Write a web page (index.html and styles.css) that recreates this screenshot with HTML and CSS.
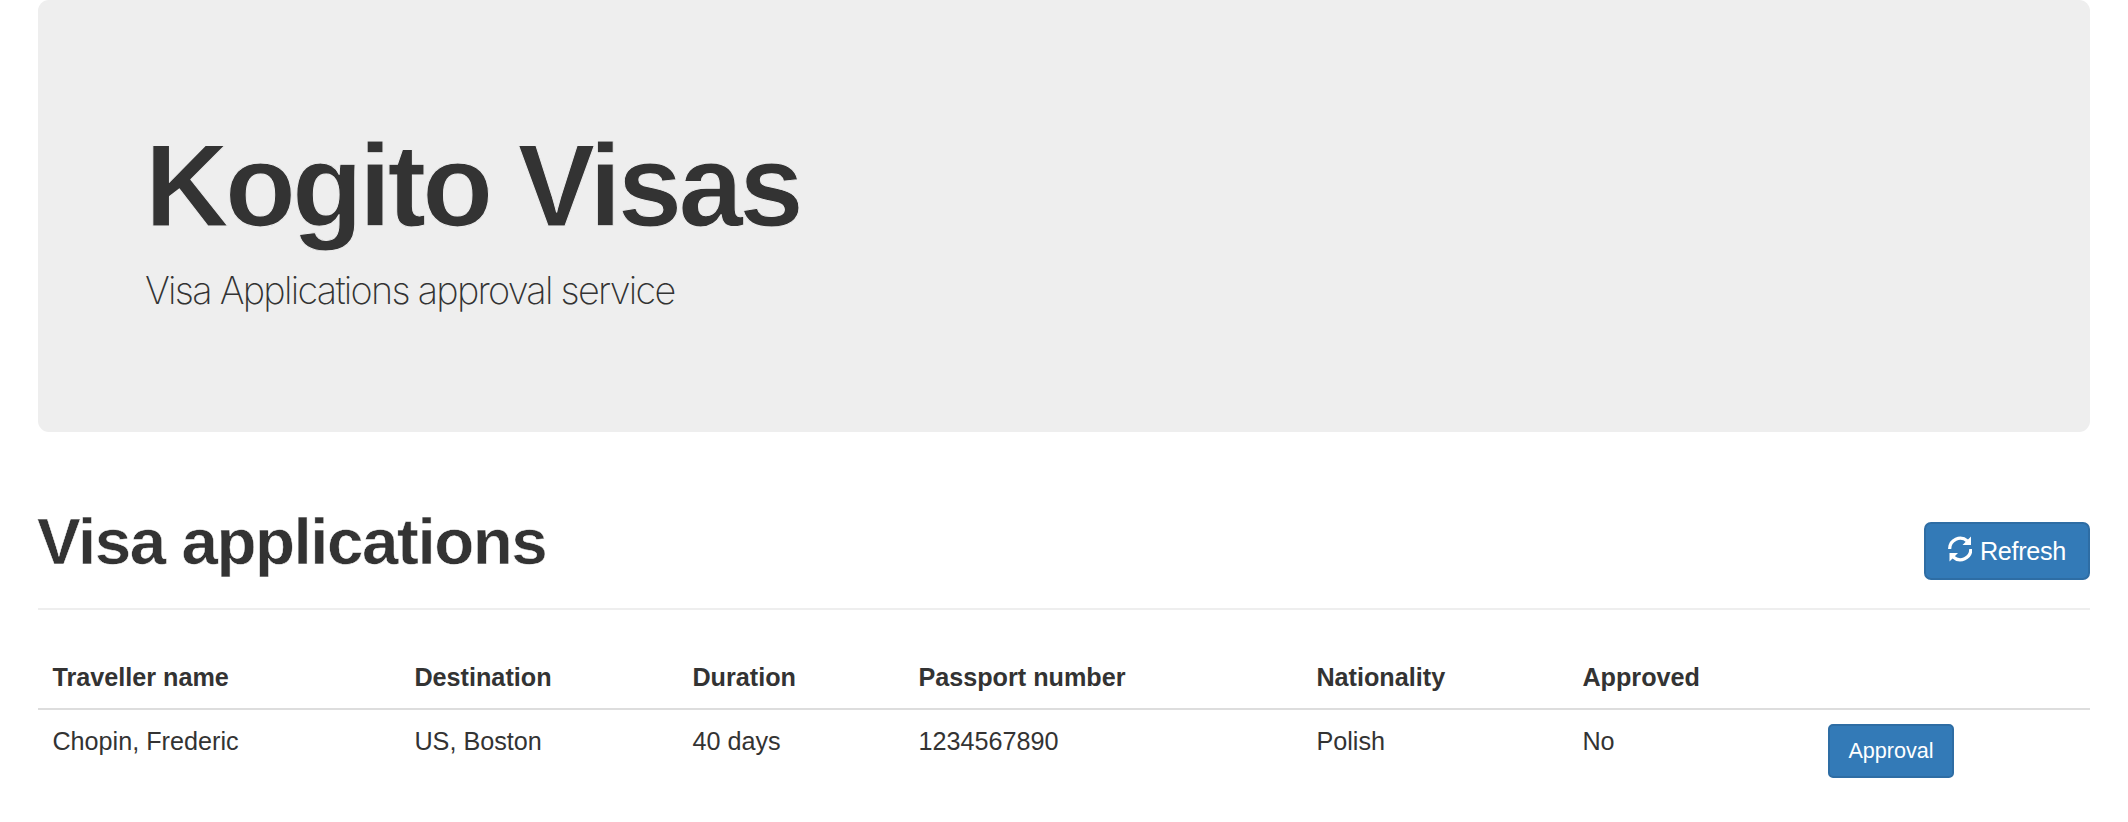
FILE: index.html
```html
<!DOCTYPE html>
<html lang="en">
<head>
<meta charset="utf-8">
<title>Kogito Visas</title>
<link rel="stylesheet" href="styles.css">
</head>
<body>
<div class="container">
  <header class="jumbotron">
    <h1 class="jumbotron-title">Kogito Visas</h1>
    <p class="jumbotron-lead">Visa Applications approval service</p>
  </header>
  <div class="page-header">
    <h1 class="page-title">Visa applications</h1>
    <button class="btn btn-refresh" type="button">
      <svg class="icon" viewBox="0 0 24 26" aria-hidden="true">
        <path d="M1.7 13A10.5 10.5 0 0 1 19.3 5" fill="none" stroke="currentColor" stroke-width="3.2"/>
        <path d="M23 0.5V9H14.5Z" fill="currentColor"/>
        <path d="M22.8 13A10.5 10.5 0 0 1 5.2 21" fill="none" stroke="currentColor" stroke-width="3.2"/>
        <path d="M1.5 25.5V17H10Z" fill="currentColor"/>
      </svg>
      <span class="btn-label">Refresh</span>
    </button>
  </div>
  <table class="table">
    <colgroup>
      <col class="col-name"><col class="col-destination"><col class="col-duration"><col class="col-passport"><col class="col-nationality"><col class="col-approved"><col>
    </colgroup>
    <thead>
      <tr><th>Traveller name</th><th>Destination</th><th>Duration</th><th>Passport number</th><th>Nationality</th><th>Approved</th><th></th></tr>
    </thead>
    <tbody>
      <tr><td>Chopin, Frederic</td><td>US, Boston</td><td>40 days</td><td>1234567890</td><td>Polish</td><td>No</td><td class="cell-action"><button class="btn btn-sm" type="button">Approval</button></td></tr>
    </tbody>
  </table>
</div>
</body>
</html>
```

FILE: styles.css
```css
* { box-sizing: border-box; }
body {
  margin: 0;
  background: #fff;
  color: #333;
  font: 25.2px/36px "Liberation Sans", Arial, sans-serif;
}
.container { padding: 0 38px; }
.jumbotron {
  height: 432px;
  padding: 124px 107px 0;
  background: #eee;
  border-radius: 11px;
}
.jumbotron-title {
  margin: 0;
  font-size: 116px;
  line-height: 125px;
  font-weight: 700;
  letter-spacing: -3.8px;
  -webkit-text-stroke: 1px #eee;
}
.jumbotron-lead {
  margin: 14px 0 0;
  font-family: Inter, "Liberation Sans", sans-serif;
  font-size: 37.8px;
  line-height: 54px;
  font-weight: 200;
  letter-spacing: -1.73px;
}
.page-header {
  display: flex;
  justify-content: space-between;
  align-items: flex-start;
  height: 178px;
  padding-top: 73px;
  border-bottom: 2px solid #eee;
}
.page-title {
  margin: 1px 0 0 -1px;
  font-size: 65.5px;
  line-height: 71px;
  font-weight: 700;
  letter-spacing: -1.45px;
  -webkit-text-stroke: 0.5px #fff;
}
.btn {
  display: flex;
  align-items: center;
  justify-content: center;
  padding: 0;
  border: 2px solid #2e6da4;
  background: #337ab7;
  color: #fff;
  font-family: inherit;
}
.btn-refresh {
  width: 166px;
  height: 58px;
  margin-top: 17px;
  gap: 8px;
  border-radius: 7px;
  font-size: 25.2px;
  letter-spacing: -0.3px;
}
.icon { width: 24px; height: 26px; margin-top: -5px; }
.btn-sm {
  width: 126px;
  height: 54px;
  border-radius: 5px;
  font-size: 21.6px;
}
.table {
  width: 100%;
  margin-top: 34px;
  border-collapse: separate;
  border-spacing: 0;
  table-layout: fixed;
}
.table th {
  height: 66px;
  padding: 15px 14px 13px 14.4px;
  border-bottom: 2px solid #ddd;
  text-align: left;
  font-weight: 700;
}
.table td { padding: 13px 14px 14px 14.4px; vertical-align: top; }
.table .cell-action { padding: 14px; }
.col-name { width: 362px; }
.col-destination { width: 278px; }
.col-duration { width: 226px; }
.col-passport { width: 398px; }
.col-nationality { width: 266px; }
.col-approved { width: 246px; }
```
